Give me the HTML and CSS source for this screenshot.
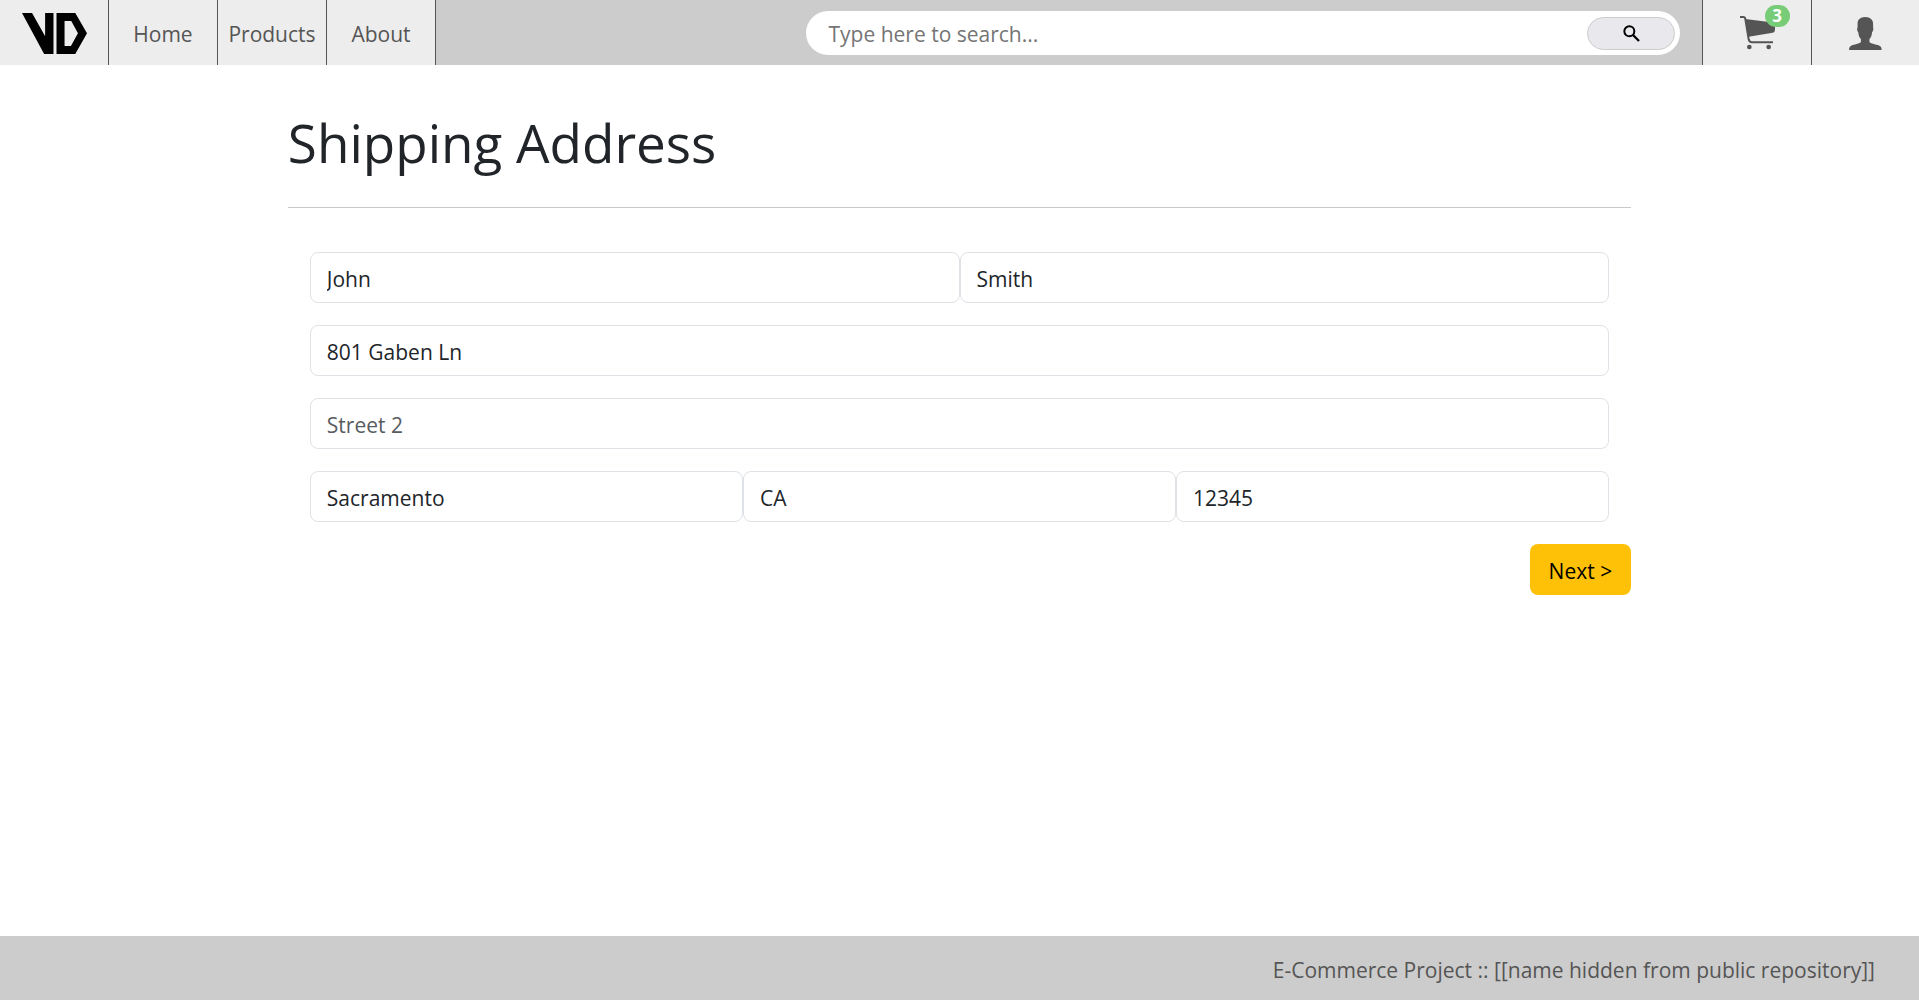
FILE: index.html
```html
<!DOCTYPE html>
<html lang="en">
<head>
  <meta charset="utf-8">
  <meta name="viewport" content="width=device-width, initial-scale=1">
  <title>Shipping Address</title>
  <link rel="stylesheet" href="styles.css">
</head>
<body>
  <header class="navbar">
    <nav class="nav-links" aria-label="Main">
      <a class="nav-cell" href="#" aria-label="VD home">
        <svg class="logo" viewBox="0 0 194 122" aria-hidden="true">
          <path d="M0 0H30L69 69V0H94V122H66Z"/>
          <path fill-rule="evenodd" d="M103 0H159L194 60L159 122H103ZM127 24V98H146L167 60L147 24Z"/>
        </svg>
      </a>
      <a class="nav-cell nav-text" href="#">Home</a>
      <a class="nav-cell nav-text" href="#">Products</a>
      <a class="nav-cell nav-text" href="#">About</a>
    </nav>
    <div class="search-area">
      <form class="search" role="search">
        <input class="search-input" type="search" placeholder="Type here to search..." aria-label="Search">
        <button class="search-button" type="button" aria-label="Search">
          <svg class="search-icon" viewBox="0 0 51 51" fill="none" stroke="#000" aria-hidden="true">
            <circle cx="19" cy="19" r="15" stroke-width="6"/>
            <path d="M30 30L48 48" stroke-width="7"/>
          </svg>
        </button>
      </form>
    </div>
    <nav class="nav-actions" aria-label="Account">
      <a class="nav-cell" href="#" aria-label="Cart, 3 items">
        <span class="cart">
          <svg class="cart-icon" viewBox="0 0 105 102" aria-hidden="true">
            <path d="M0 3H10Q15 3 16 9L26 70Q28 79 36 79H99" fill="none" stroke="#555" stroke-width="6"/>
            <path d="M16 9L105 20V41Q105 49 98 50L26 62Z"/>
            <circle cx="28" cy="93" r="7"/>
            <circle cx="86" cy="93" r="7"/>
          </svg>
          <span class="cart-badge">3</span>
        </span>
      </a>
      <a class="nav-cell" href="#" aria-label="Account">
        <svg class="user-icon" viewBox="0 0 100 100" aria-hidden="true">
          <path d="M49 0C65 0 73 9 73 20V31C75 37 73 43 70 46C69 55 67 62 62 67V76C66 83 89 83 95 89Q99 93 99 100H0Q0 93 4 89C10 83 32 83 36 76V67C31 62 29 55 28 46C25 43 23 37 26 31V20C26 9 33 0 49 0Z"/>
        </svg>
      </a>
    </nav>
  </header>

  <main class="content">
    <h1 class="title">Shipping Address</h1>
    <form class="address">
      <div class="fields">
        <div class="field-row">
          <input class="field" type="text" value="John" placeholder="First Name" aria-label="First name">
          <input class="field" type="text" value="Smith" placeholder="Last Name" aria-label="Last name">
        </div>
        <div class="field-row">
          <input class="field" type="text" value="801 Gaben Ln" placeholder="Street 1" aria-label="Street 1">
        </div>
        <div class="field-row">
          <input class="field" type="text" placeholder="Street 2" aria-label="Street 2">
        </div>
        <div class="field-row">
          <input class="field" type="text" value="Sacramento" placeholder="City" aria-label="City">
          <input class="field" type="text" value="CA" placeholder="State" aria-label="State">
          <input class="field" type="text" value="12345" placeholder="Zip" aria-label="Zip code">
        </div>
      </div>
      <button class="next" type="button">Next &gt;</button>
    </form>
  </main>

  <footer class="footer">E-Commerce Project :: [[name hidden from public repository]]</footer>
</body>
</html>
```
FILE: styles.css
```css
* {
  box-sizing: border-box;
}

body {
  display: flex;
  flex-direction: column;
  min-height: 100vh;
  margin: 0;
  background: #fff;
  color: #212529;
  font: 21px/33px "Segoe UI", "Open Sans", sans-serif;
}

input,
button {
  font: inherit;
}

/* Top bar */
.navbar {
  display: flex;
  height: 65px;
  background: #ccc;
}

.nav-links,
.nav-actions {
  display: flex;
}

.nav-cell {
  display: flex;
  align-items: center;
  justify-content: center;
  width: 109px;
  padding-top: 1px;
  background: #ededed;
  color: #555;
  fill: #555;
  text-decoration: none;
}

.nav-text {
  padding-top: 4px;
}

.nav-links .nav-cell {
  border-right: 1px solid #555;
}

.nav-actions .nav-cell {
  border-left: 1px solid #555;
}

.nav-actions .nav-cell:last-child {
  width: 108px;
}

.logo {
  width: 65px;
  height: 41px;
  fill: #000;
}

.search-area {
  display: flex;
  flex: 1;
  align-items: center;
  justify-content: flex-end;
  padding-top: 1px;
}

.search {
  display: flex;
  align-items: center;
  width: 69%;
  height: 44px;
  margin-right: 22px;
  padding: 0 5px 0 22px;
  border-radius: 22px;
  background: #fff;
}

.search-input {
  flex: 1;
  min-width: 0;
  padding: 3px 0 0;
  border: 0;
  outline: 0;
  background: transparent;
}

.search-input::placeholder {
  color: #757575;
}

.search-button {
  display: flex;
  align-items: center;
  justify-content: center;
  width: 88px;
  height: 33px;
  border: 1px solid #ccc;
  border-radius: 17px;
  background: #e9e9ed;
}

.search-icon {
  width: 17px;
  height: 17px;
}

.cart {
  position: relative;
  display: flex;
}

.cart-icon {
  width: 35px;
  height: 34px;
}

.cart-badge {
  position: absolute;
  top: -11px;
  left: 25px;
  width: 25px;
  border-radius: 11px;
  background: #7c7;
  color: #fff;
  font-size: 17px;
  font-weight: 700;
  line-height: 22px;
  text-align: center;
}

.user-icon {
  width: 33px;
  height: 33px;
}

/* Address form */
.content {
  flex: 1;
  width: 70%;
  margin: 0 auto;
}

.title {
  margin: 44px 0;
  padding-bottom: 30px;
  border-bottom: 1px solid #c8c9ca;
  font-size: 53px;
  font-weight: 400;
  line-height: 68px;
}

.address {
  display: flex;
  flex-direction: column;
}

.fields {
  display: grid;
  gap: 22px;
  padding: 0 22px 22px;
}

.field-row {
  display: flex;
}

.field {
  flex: 1;
  min-width: 0;
  height: 51px;
  padding: 2px 16px 0;
  border: 1px solid #dee2e6;
  border-radius: 8px;
  background: #fff;
  color: #212529;
}

.field::placeholder {
  color: #595c5f;
  opacity: 1;
}

.next {
  align-self: flex-end;
  height: 51px;
  padding: 3px 19px 0;
  border: 0;
  border-radius: 8px;
  background: #ffc107;
  color: #000;
}

.footer {
  padding: 18px 44px 13px;
  background: #ccc;
  color: #555;
  text-align: right;
}
```
